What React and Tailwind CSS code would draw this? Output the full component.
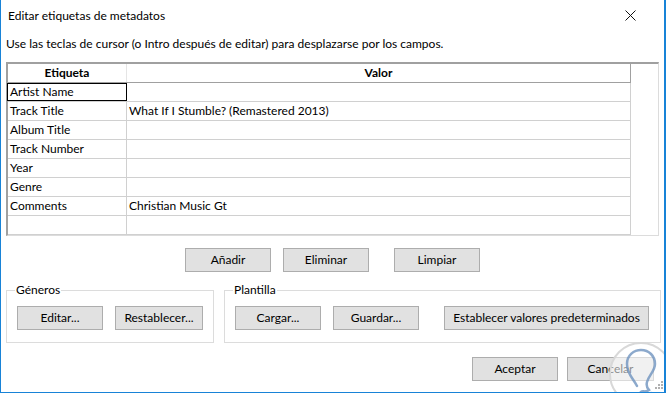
import React from 'react'

const rows = [
  ['Artist Name', ''],
  ['Track Title', 'What If I Stumble? (Remastered 2013)'],
  ['Album Title', ''],
  ['Track Number', ''],
  ['Year', ''],
  ['Genre', ''],
  ['Comments', 'Christian Music Gt'],
  ['', ''],
]

function Btn({ children, className = '' }) {
  return (
    <button className={`h-[24px] bg-[#e1e1e1] border border-[#adadad] text-[12px] leading-none text-black ${className}`}>
      {children}
    </button>
  )
}

function Group({ label, className = '', children }) {
  return (
    <div className={`relative border border-[#dcdcdc] h-[53px] ${className}`}>
      <span className="absolute -top-[9px] left-[8px] bg-white px-[1px] text-[12px] leading-[16px]">{label}</span>
      <div className="flex items-center h-full pt-[3px] px-[10px]">{children}</div>
    </div>
  )
}

export default function App() {
  return (
    <div
      className="relative w-[666px] h-[393px] bg-white border-l border-r-2 border-b border-[#1883d7] text-black overflow-hidden"
      style={{ fontFamily: 'Lato, "Noto Sans", sans-serif' }}
    >
      {/* title bar */}
      <div className="h-[31px] flex items-center justify-between pl-[7px] pr-[28px]">
        <span className="text-[12px]">Editar etiquetas de metadatos</span>
        <svg width="11" height="11" viewBox="0 0 11 11">
          <path d="M0.5 0.5 L10.5 10.5 M10.5 0.5 L0.5 10.5" stroke="#111" strokeWidth="1" />
        </svg>
      </div>

      <p className="h-[31px] pt-[5px] pl-[5px] text-[12px] leading-[16px]">
        Use las teclas de cursor (o Intro después de editar) para desplazarse por los campos.
      </p>

      {/* tag grid */}
      <div className="ml-[5px] w-[653px] h-[174px] border-t-2 border-l-2 border-[#a0a0a0] border-r border-b border-r-[#dcdcdc] border-b-[#dcdcdc] flex">
        <div className="w-[623px] text-[12px]">
          <div className="flex h-[19px] border-b border-[#a0a0a0]">
            <div className="w-[119px] border-r border-[#e5e5e5] text-center font-bold leading-[18px]">Etiqueta</div>
            <div className="w-[504px] border-r border-[#a0a0a0] text-center font-bold leading-[18px]">Valor</div>
          </div>
          {rows.map(([k, v], i) => (
            <div key={i} className="flex h-[19px] border-b border-[#d0d0d0]">
              <div
                className={`w-[119px] border-r border-[#d0d0d0] pl-[2px] leading-[18px] ${i === 0 ? 'outline outline-1 outline-black -outline-offset-1 -ml-[1px] pl-[3px] w-[120px]' : ''}`}
              >
                {k}
              </div>
              <div className="w-[504px] border-r border-[#d0d0d0] pl-[2px] leading-[18px]">{v}</div>
            </div>
          ))}
        </div>
      </div>

      {/* row buttons */}
      <div className="flex mt-[12px] pl-[184px]">
        <Btn className="w-[86px]">Añadir</Btn>
        <Btn className="w-[86px] ml-[12px]">Eliminar</Btn>
        <Btn className="w-[86px] ml-[25px]">Limpiar</Btn>
      </div>

      {/* groups */}
      <div className="flex mt-[18px] pl-[5px]">
        <Group label="Géneros" className="w-[208px]">
          <Btn className="w-[86px]">Editar...</Btn>
          <Btn className="w-[88px] ml-[12px]">Restablecer...</Btn>
        </Group>
        <Group label="Plantilla" className="w-[437px] ml-[10px]">
          <Btn className="w-[86px]">Cargar...</Btn>
          <Btn className="w-[86px] ml-[12px]">Guardar...</Btn>
          <Btn className="w-[205px] ml-[25px]">Establecer valores predeterminados</Btn>
        </Group>
      </div>

      {/* dialog buttons */}
      <div className="flex mt-[14px] pl-[471px]">
        <Btn className="w-[86px]">Aceptar</Btn>
        <Btn className="w-[87px] ml-[9px]">Cancelar</Btn>
      </div>

      {/* watermark */}
      <svg className="absolute left-[606px] top-[338px]" width="70" height="70" viewBox="0 0 70 70">
        <circle cx="34" cy="36" r="31" fill="rgba(255,255,255,0.55)" stroke="#d8d8d8" strokeWidth="2" />
        <path
          d="M30 48 C26 40 20 36 20 26 C20 17 27 12 34 12 C42 12 48 18 48 26 C48 33 42 37 40 44 C39 48 40 50 42 52 C38 55 36 52 34 54 C36 56 40 57 44 55"
          fill="none"
          stroke="#6f94bf"
          strokeWidth="2.5"
          strokeLinecap="round"
          opacity="0.8"
        />
      </svg>
      <svg className="absolute left-[654px] top-[381px]" width="9" height="9" viewBox="0 0 9 9">
        <g fill="#b0b0b0">
          <rect x="6" y="0" width="2" height="2" />
          <rect x="3" y="3" width="2" height="2" />
          <rect x="6" y="3" width="2" height="2" />
          <rect x="0" y="6" width="2" height="2" />
          <rect x="3" y="6" width="2" height="2" />
          <rect x="6" y="6" width="2" height="2" />
        </g>
      </svg>
    </div>
  )
}
